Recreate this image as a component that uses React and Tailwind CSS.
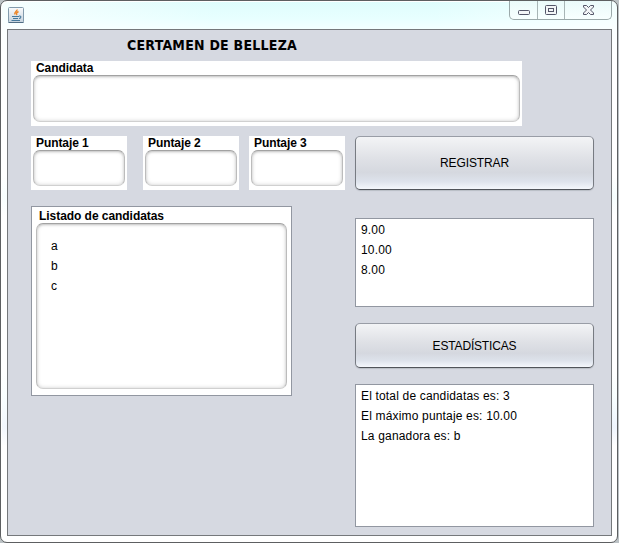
import React from "react";

function JavaIcon() {
  return (
    <svg width="16" height="16" viewBox="0 0 16 16" className="block">
      <defs>
        <linearGradient id="tile" x1="0" y1="0" x2="0" y2="1">
          <stop offset="0" stopColor="#fafbfc" />
          <stop offset="1" stopColor="#c5d2dd" />
        </linearGradient>
      </defs>
      <rect x="0.5" y="0.5" width="15" height="15" rx="1" fill="url(#tile)" stroke="#829bad" />
      <path d="M.5 15.5h15" stroke="#506d84" />
      <path d="M9 2.500c.5 1.500-3 2.500-2 5M10.500 4.500C8.500 5.500 8 6.500 9 8" fill="none" stroke="#ed8423" strokeWidth="1.400" />
      <path d="M4 9.500h7M5 11.500h5M3.500 13.500h8.500M11 9c2.500-.5 2.500 2 0 2.500" fill="none" stroke="#46799c" strokeWidth="1.100" />
    </svg>
  );
}

function WindowControls() {
  return (
    <div className="-mr-px flex h-[19px] w-[103px] rounded-b-[5px] border border-t-0 border-[#9ba9aa] bg-gradient-to-b from-[#eafafa] to-[#f8ffff]">
      <div className="w-[28px] border-r border-[#a8b5b6]">
        <svg width="27" height="18" className="block">
          <rect x="8.500" y="9.500" width="11" height="4" rx="1" fill="#f3f5f7" stroke="#535568" />
        </svg>
      </div>
      <div className="w-[27px] border-r border-[#a8b5b6]">
        <svg width="26" height="18" className="block">
          <rect x="7.500" y="4.500" width="11" height="9" rx="1" fill="#f3f5f7" stroke="#535568" />
          <rect x="10.500" y="7.500" width="5" height="3" fill="#f3f5f7" stroke="#535568" />
        </svg>
      </div>
      <div>
        <svg width="46" height="18" className="block">
          <path d="M18.500 4.500h3l2 2 2-2h3v1.500l-3 3 3 3v1.500h-3l-2-2-2 2h-3v-1.500l3-3-3-3z" fill="#f3f5f7" stroke="#535568" />
        </svg>
      </div>
    </div>
  );
}

const inset =
  "rounded-[7px] border border-[#bcbcbc] border-t-[#a2a2a2] border-b-[#d0d0d0] bg-white shadow-[inset_0_1px_2px_#c8c8c8,inset_0_0_4px_#d4d4d4]";

function Field({ label, className }) {
  return (
    <div className={`flex flex-col bg-white px-[2px] pb-[4px] ${className}`}>
      <label className="h-[14px] pl-[3px] text-[12px] leading-[14px] font-bold tracking-[-0.08px]">{label}</label>
      <div className={`grow ${inset}`} />
    </div>
  );
}

function Button({ children, className }) {
  return (
    <button
      className={`block w-[239px] rounded-[5px] border border-[#777b82] border-t-[#999da6] border-b-[#50545a] bg-[linear-gradient(#f3f4f6_0%,#dfe1e6_42%,#d5d8df_68%,#dde2eb_85%,#f4f7fc_100%)] text-[12px] shadow-[0_1px_1px_#b9bdc5] ${className}`}
    >
      {children}
    </button>
  );
}

function Lines({ lines, className }) {
  return (
    <div className={`w-[239px] border border-[#9297a1] bg-white pt-[1px] pl-[5px] ${className}`}>
      {lines.map((line) => (
        <div key={line} className="h-[20px] text-[12px] leading-[20px] tracking-[0.17px] whitespace-nowrap">
          {line}
        </div>
      ))}
    </div>
  );
}

export default function App() {
  return (
    <div className="h-[543px] w-[619px] overflow-hidden bg-[#bcc2c5] font-['Liberation_Sans',Arial,sans-serif] text-black">
      <div className="flex h-[543px] w-[618px] flex-col rounded-[7px] border border-[#5d5f61] bg-[linear-gradient(90deg,rgba(255,255,255,0.7)_0%,rgba(255,255,255,0)_35%,rgba(255,255,255,0)_70%,rgba(255,255,255,0.6)_100%),linear-gradient(#defdfd_0px,#e8ffff_18px,#f4ffff_29px,#ffffff_65px,#ffffff_175px,#e8fdfd_195px,#ffffff_215px,#ffffff_370px,#edfefe_395px,#d6e6fb_426px,#ffffff_445px,#ffffff_100%)] px-[6px] shadow-[inset_1px_1px_0_#ffffff]">
        <header className="flex h-[28px] items-start justify-between pl-[1px]">
          <div className="pt-[6px]">
            <JavaIcon />
          </div>
          <WindowControls />
        </header>
        <main className="h-[507px] w-[605px] border border-[#75787b] bg-[#d6d9e1] pl-[23px]">
          <h1 className="h-[31px] pl-[96px] font-['DejaVu_Sans_Condensed','DejaVu_Sans',sans-serif] text-[14px] leading-[30px] font-bold tracking-[0.24px] whitespace-nowrap">
            CERTAMEN DE BELLEZA
          </h1>
          <Field label="Candidata" className="h-[65px] w-[491px]" />
          <div className="mt-[10px] flex">
            <div className="w-[324px]">
              <div className="flex">
                <Field label="Puntaje 1" className="h-[54px] w-[96px]" />
                <Field label="Puntaje 2" className="ml-[16px] h-[54px] w-[96px]" />
                <Field label="Puntaje 3" className="ml-[10px] h-[54px] w-[96px]" />
              </div>
              <section className="mt-[16px] flex h-[190px] w-[261px] flex-col border border-[#9297a1] bg-white px-[4px] pb-[6px]">
                <h2 className="h-[16px] pl-[3px] text-[12px] leading-[18px] font-bold tracking-[-0.05px]">Listado de candidatas</h2>
                <div className={`grow pt-[12px] pl-[14px] ${inset}`}>
                  {["a", "b", "c"].map((name) => (
                    <div key={name} className="h-[20px] text-[12px] leading-[20px]">
                      {name}
                    </div>
                  ))}
                </div>
              </section>
            </div>
            <div>
              <Button className="h-[54px] tracking-[-0.1px]">REGISTRAR</Button>
              <Lines className="mt-[28px] h-[89px]" lines={["9.00", "10.00", "8.00"]} />
              <Button className="mt-[16px] h-[45px] tracking-[-0.17px]">ESTADÍSTICAS</Button>
              <Lines
                className="mt-[16px] h-[143px]"
                lines={["El total de candidatas es: 3", "El máximo puntaje es: 10.00", "La ganadora es: b"]}
              />
            </div>
          </div>
        </main>
      </div>
    </div>
  );
}
